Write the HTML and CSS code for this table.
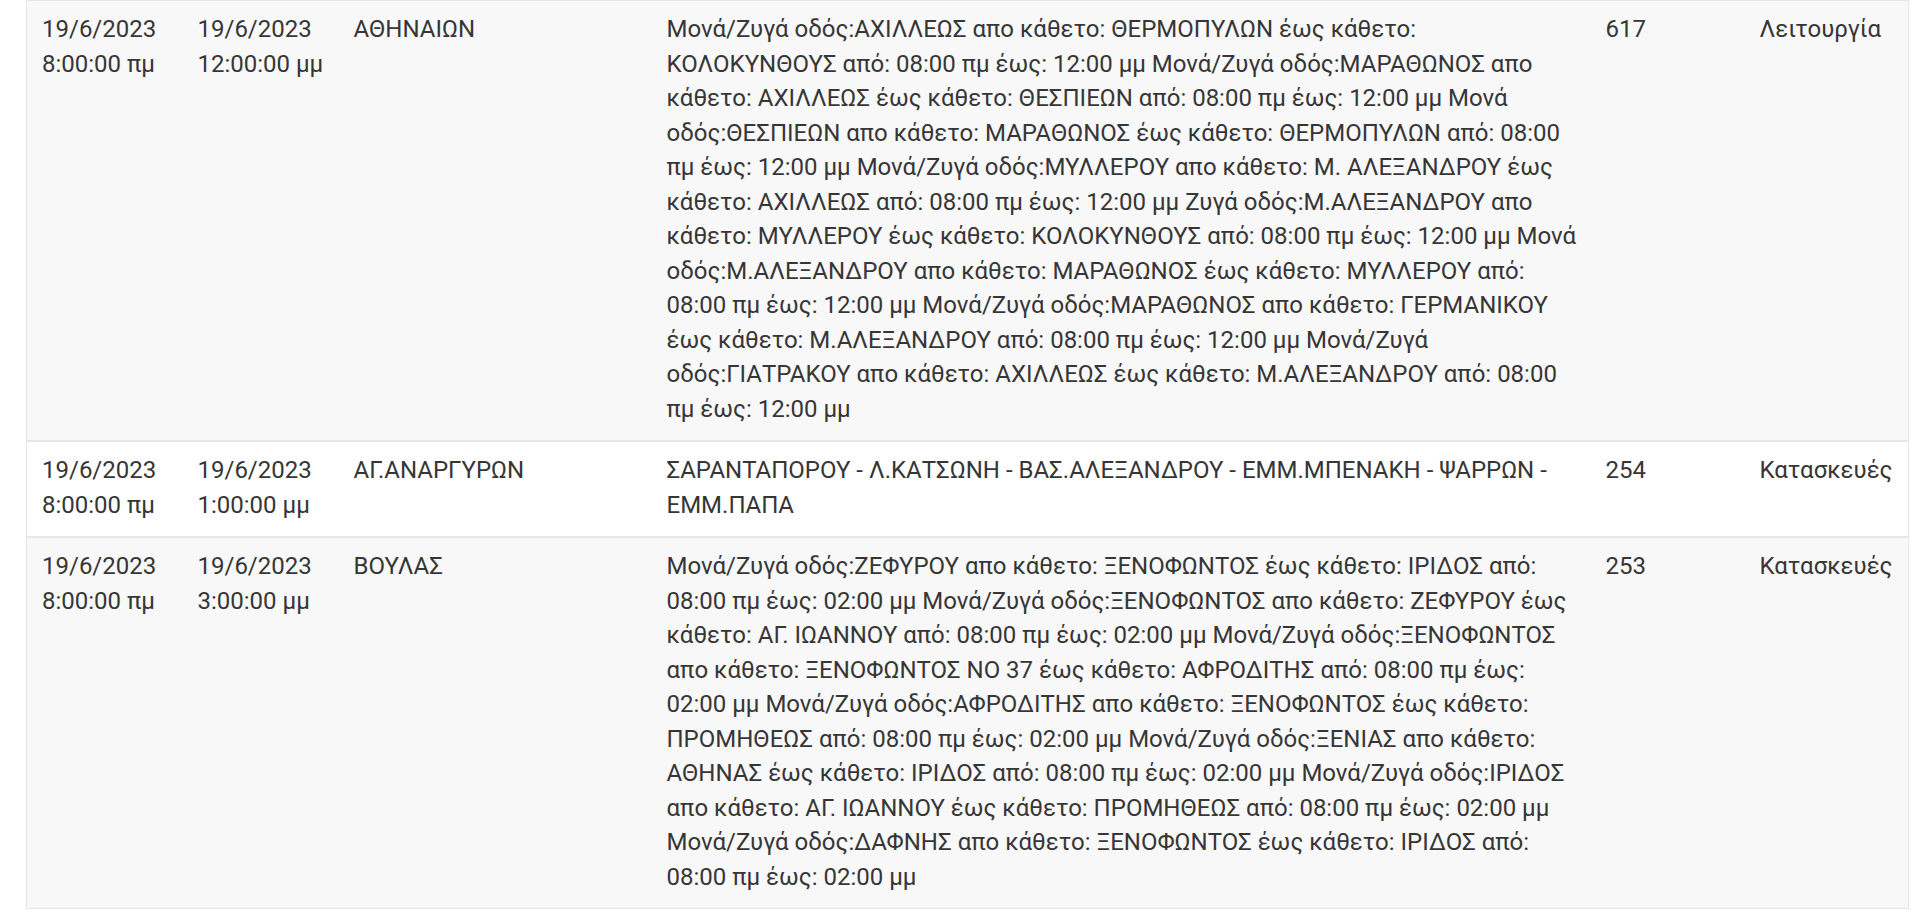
FILE: index.html
```html
<!DOCTYPE html>
<html lang="el">
<head>
  <meta charset="UTF-8" />
  <meta name="viewport" content="width=device-width, initial-scale=1.0"/>
  <title>Διακοπές Νερού</title>
  <link rel="stylesheet" href="styles.css">
</head>
<body>

  <div class="table-wrap">
    <table class="outages">
      <colgroup>
        <col class="col-start">
        <col class="col-end">
        <col class="col-area">
        <col class="col-streets">
        <col class="col-num">
        <col class="col-type">
      </colgroup>
      <tbody>
        <tr>
          <td>19/6/2023 8:00:00 πμ</td>
          <td>19/6/2023 12:00:00 μμ</td>
          <td>ΑΘΗΝΑΙΩΝ</td>
          <td class="streets">Μονά/Ζυγά οδός:ΑΧΙΛΛΕΩΣ απο κάθετο: ΘΕΡΜΟΠΥΛΩΝ έως κάθετο: ΚΟΛΟΚΥΝΘΟΥΣ&nbsp;από: 08:00 πμ έως: 12:00 μμ Μονά/Ζυγά οδός:ΜΑΡΑΘΩΝΟΣ απο κάθετο: ΑΧΙΛΛΕΩΣ έως κάθετο: ΘΕΣΠΙΕΩΝ από: 08:00 πμ έως: 12:00 μμ Μονά οδός:ΘΕΣΠΙΕΩΝ απο κάθετο: ΜΑΡΑΘΩΝΟΣ έως κάθετο: ΘΕΡΜΟΠΥΛΩΝ από: 08:00 πμ έως: 12:00 μμ Μονά/Ζυγά οδός:ΜΥΛΛΕΡΟΥ απο κάθετο: Μ. ΑΛΕΞΑΝΔΡΟΥ έως κάθετο: ΑΧΙΛΛΕΩΣ από: 08:00 πμ έως: 12:00 μμ Ζυγά οδός:Μ.ΑΛΕΞΑΝΔΡΟΥ απο κάθετο: ΜΥΛΛΕΡΟΥ έως κάθετο: ΚΟΛΟΚΥΝΘΟΥΣ από: 08:00 πμ έως: 12:00 μμ Μονά οδός:Μ.ΑΛΕΞΑΝΔΡΟΥ απο κάθετο: ΜΑΡΑΘΩΝΟΣ έως κάθετο: ΜΥΛΛΕΡΟΥ από: 08:00 πμ έως: 12:00 μμ Μονά/Ζυγά οδός:ΜΑΡΑΘΩΝΟΣ απο κάθετο: ΓΕΡΜΑΝΙΚΟΥ έως κάθετο: Μ.ΑΛΕΞΑΝΔΡΟΥ από: 08:00 πμ έως: 12:00 μμ Μονά/Ζυγά οδός:ΓΙΑΤΡΑΚΟΥ απο κάθετο: ΑΧΙΛΛΕΩΣ έως κάθετο: Μ.ΑΛΕΞΑΝΔΡΟΥ από: 08:00 πμ έως: 12:00 μμ</td>
          <td>617</td>
          <td>Λειτουργία</td>
        </tr>
        <tr>
          <td>19/6/2023 8:00:00 πμ</td>
          <td>19/6/2023 1:00:00 μμ</td>
          <td>ΑΓ.ΑΝΑΡΓΥΡΩΝ</td>
          <td class="streets">ΣΑΡΑΝΤΑΠΟΡΟΥ - Λ.ΚΑΤΣΩΝΗ - ΒΑΣ.ΑΛΕΞΑΝΔΡΟΥ - ΕΜΜ.ΜΠΕΝΑΚΗ - ΨΑΡΡΩΝ - ΕΜΜ.ΠΑΠΑ</td>
          <td>254</td>
          <td>Κατασκευές</td>
        </tr>
        <tr>
          <td>19/6/2023 8:00:00 πμ</td>
          <td>19/6/2023 3:00:00 μμ</td>
          <td>ΒΟΥΛΑΣ</td>
          <td class="streets">Μονά/Ζυγά οδός:ΖΕΦΥΡΟΥ απο κάθετο: ΞΕΝΟΦΩΝΤΟΣ έως κάθετο: ΙΡΙΔΟΣ από: 08:00 πμ έως: 02:00 μμ Μονά/Ζυγά οδός:ΞΕΝΟΦΩΝΤΟΣ απο κάθετο: ΖΕΦΥΡΟΥ έως κάθετο: ΑΓ. ΙΩΑΝΝΟΥ από: 08:00 πμ έως: 02:00 μμ Μονά/Ζυγά οδός:ΞΕΝΟΦΩΝΤΟΣ απο κάθετο: ΞΕΝΟΦΩΝΤΟΣ ΝΟ 37 έως κάθετο: ΑΦΡΟΔΙΤΗΣ από: 08:00 πμ έως: 02:00 μμ Μονά/Ζυγά οδός:ΑΦΡΟΔΙΤΗΣ απο κάθετο: ΞΕΝΟΦΩΝΤΟΣ έως κάθετο: ΠΡΟΜΗΘΕΩΣ από: 08:00 πμ έως: 02:00 μμ Μονά/Ζυγά οδός:ΞΕΝΙΑΣ απο κάθετο: ΑΘΗΝΑΣ έως κάθετο: ΙΡΙΔΟΣ από: 08:00 πμ έως: 02:00 μμ Μονά/Ζυγά οδός:ΙΡΙΔΟΣ απο κάθετο: ΑΓ. ΙΩΑΝΝΟΥ έως κάθετο: ΠΡΟΜΗΘΕΩΣ από: 08:00 πμ έως: 02:00 μμ Μονά/Ζυγά οδός:ΔΑΦΝΗΣ απο κάθετο: ΞΕΝΟΦΩΝΤΟΣ έως κάθετο: ΙΡΙΔΟΣ από: 08:00 πμ έως: 02:00 μμ</td>
          <td>253</td>
          <td>Κατασκευές</td>
        </tr>
      </tbody>
    </table>
  </div>

</body>
</html>
```

FILE: styles.css
```css
body {
  margin: 0;
  padding: 0;
  background-color: #fff;
  font-family: Roboto, "Noto Sans", sans-serif;
  color: #363636;
}

.table-wrap {
  padding: 0 11px 0 26px;
}

.outages {
  width: 100%;
  border-collapse: collapse;
  table-layout: fixed;
  font-size: 24px;
  line-height: 34.5px;
}

.col-start { width: 156px; }
.col-end { width: 156px; }
.col-area { width: 313px; }
.col-streets { width: 939px; }
.col-num { width: 154px; }
.col-type { width: auto; }

.outages tr {
  background: #f8f8f8;
  border: 1px solid #e6e6e6;
  border-top-width: 2px;
}

.outages tr:first-child {
  border-top-width: 1px;
}

.outages tr:nth-child(2) {
  background: #fff;
}

.outages td {
  padding: 11px 15px 14px;
  vertical-align: top;
  text-align: left;
}

.outages td.streets {
  padding-right: 12px;
}
```
